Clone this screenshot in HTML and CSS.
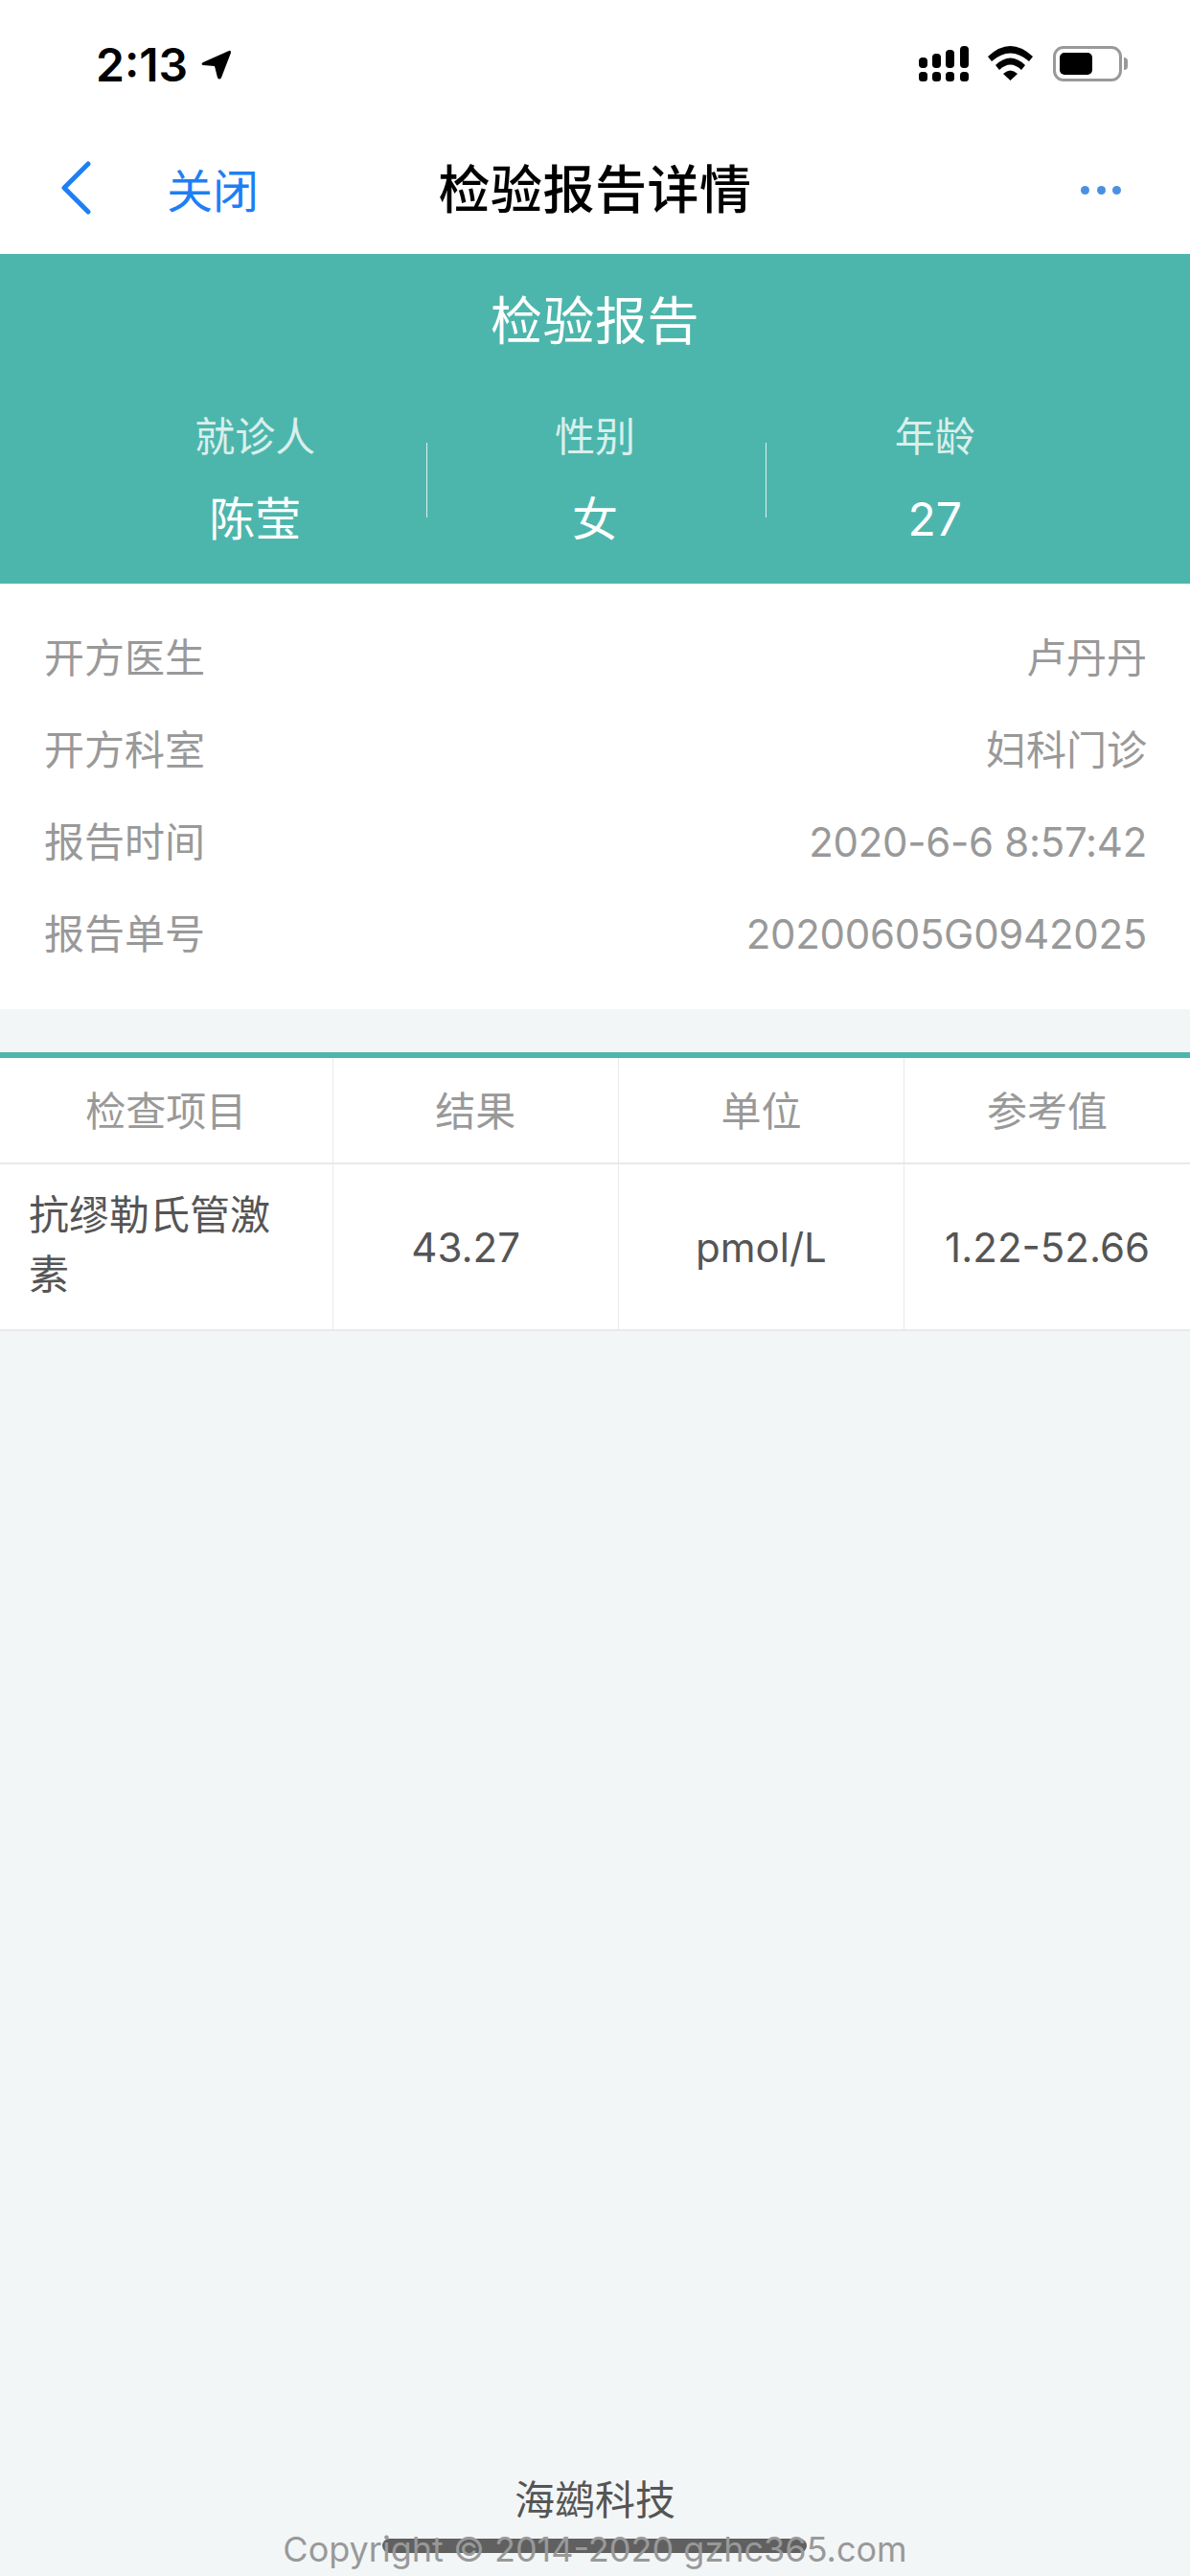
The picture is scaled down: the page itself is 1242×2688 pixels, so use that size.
FILE: index.html
```html
<!DOCTYPE html>
<html lang="zh-CN">
<head>
  <meta charset="UTF-8" />
  <meta name="viewport" content="width=device-width, initial-scale=1.0"/>
  <title>检验报告详情</title>
  <link rel="stylesheet" href="styles.css">
</head>
<body>
<div class="status-bar">
  <div class="status-left">
    <span class="clock">2:13</span>
    <svg class="arrow" width="33" height="31" viewBox="0 0 33 31"><path d="M30 1 L3 13 Q0 15 3 16 L15 17 L18 29 Q20 32 22 29 L32 3 Q32 0 30 1 Z" fill="#000"/></svg>
  </div>
  <div class="status-right">
    <svg width="52" height="37" viewBox="0 0 52 37" fill="#000">
      <rect x="0" y="12" width="9" height="11" rx="4"/>
      <rect x="14" y="8" width="9" height="15" rx="4"/>
      <rect x="28" y="4" width="9" height="19" rx="4"/>
      <rect x="43" y="0" width="9" height="23" rx="4"/>
      <rect x="0" y="27" width="9" height="10" rx="3.5"/>
      <rect x="14" y="27" width="9" height="10" rx="3.5"/>
      <rect x="28" y="27" width="9" height="10" rx="3.5"/>
      <rect x="43" y="27" width="9" height="10" rx="3.5"/>
    </svg>
    <svg width="47" height="36" viewBox="0 0 47 36" fill="#000">
      <path d="M0 11 Q23.500 -11 47 11 L43 16 Q23.500 -1 4 16 Z"/>
      <path d="M8 20 Q23.500 5 39 20 L35 25 Q23.500 14 12 25 Z"/>
      <path d="M16 29 Q23.500 22 31 29 L23.500 36 Z"/>
    </svg>
    <div class="battery">
      <div class="battery-body"><div class="battery-level"></div></div>
      <div class="battery-nub"></div>
    </div>
  </div>
</div>

<div class="nav">
  <div class="nav-left">
    <svg class="back" width="32" height="56" viewBox="0 0 32 56"><path d="M29 3 L4 28 L29 53" fill="none" stroke="#1e7ff5" stroke-width="5" stroke-linecap="round" stroke-linejoin="round"/></svg>
    <span class="close">关闭</span>
  </div>
  <div class="nav-title">检验报告详情</div>
  <div class="nav-right">
    <span class="dot"></span><span class="dot"></span><span class="dot"></span>
  </div>
</div>

<div class="report-head">
  <div class="report-title">检验报告</div>
  <div class="patient">
    <div class="patient-col">
      <div class="patient-label">就诊人</div>
      <div class="patient-value">陈莹</div>
    </div>
    <div class="patient-col">
      <div class="patient-label">性别</div>
      <div class="patient-value">女</div>
    </div>
    <div class="patient-col">
      <div class="patient-label">年龄</div>
      <div class="patient-value">27</div>
    </div>
  </div>
</div>

<div class="info">
  <div class="info-row"><span>开方医生</span><span>卢丹丹</span></div>
  <div class="info-row"><span>开方科室</span><span>妇科门诊</span></div>
  <div class="info-row"><span>报告时间</span><span class="num">2020-6-6 8:57:42</span></div>
  <div class="info-row"><span>报告单号</span><span class="num">20200605G0942025</span></div>
</div>

<table class="result">
  <colgroup>
    <col class="col-name"><col class="col-val"><col class="col-val"><col class="col-val">
  </colgroup>
  <thead>
    <tr><th>检查项目</th><th>结果</th><th>单位</th><th>参考值</th></tr>
  </thead>
  <tbody>
    <tr><td class="item-name">抗缪勒氏管激素</td><td class="item-result">43.27</td><td>pmol/L</td><td>1.22-52.66</td></tr>
  </tbody>
</table>

<div class="footer">
  <div class="company">海鹚科技</div>
  <div class="copyright">Copyright © 2014-2020 gzhc365.com</div>
  <div class="home-bar"></div>
</div>
</body>
</html>
```

FILE: styles.css
```css
* {
  box-sizing: border-box;
}
html, body {
  margin: 0;
  padding: 0;
}
body {
  width: 1242px;
  height: 2688px;
  display: flex;
  flex-direction: column;
  overflow: hidden;
  background-color: #f3f6f7;
  font-family: Inter, "Noto Sans CJK SC", sans-serif;
  font-size: 42px;
  color: #999;
}

/* status bar */
.status-bar {
  height: 132px;
  padding: 48px 65px 0 100px;
  display: flex;
  justify-content: space-between;
  align-items: flex-start;
  background: white;
}
.status-left {
  display: flex;
  align-items: center;
  gap: 13px;
  height: 38px;
}
.clock {
  font-size: 48px;
  font-weight: 600;
  color: #000;
}
.status-right {
  display: flex;
  align-items: flex-start;
  gap: 20px;
}
.battery {
  display: flex;
  align-items: center;
  gap: 2px;
  height: 37px;
  margin-left: 1px;
}
.battery-body {
  width: 72px;
  height: 37px;
  padding: 4px;
  border: 3px solid #999;
  border-radius: 11px;
}
.battery-level {
  width: 34px;
  height: 100%;
  background: #000;
  border-radius: 5px;
}
.battery-nub {
  width: 4px;
  height: 13px;
  background: #999;
  border-radius: 0 4px 4px 0;
}

/* nav */
.nav {
  height: 133px;
  padding: 0 0 5px 0;
  display: grid;
  grid-template-columns: 1fr auto 1fr;
  align-items: center;
  background: white;
}
.nav-left {
  display: flex;
  align-items: center;
  padding-left: 63px;
  gap: 79px;
}
.close {
  font-size: 48px;
  color: #1e7ff5;
}
.nav-title {
  margin-bottom: 3px;
  font-size: 54px;
  font-weight: 500;
  letter-spacing: 0.500px;
  color: #000;
}
.nav-right {
  display: flex;
  justify-content: flex-end;
  gap: 7.500px;
  margin-top: 4px;
  padding-right: 72px;
}
.dot {
  width: 9px;
  height: 9px;
  border-radius: 50%;
  background: #4a90e2;
}

/* teal header */
.report-head {
  height: 344px;
  padding-top: 33px;
  background-color: #4db6ac;
  color: white;
  text-align: center;
}
.report-title {
  font-size: 54px;
  letter-spacing: 0.500px;
  line-height: 76px;
}
.patient {
  display: flex;
  margin-top: 52px;
  padding: 0 89px;
}
.patient-col {
  flex: 1;
  position: relative;
}
.patient-col + .patient-col::before {
  content: "";
  position: absolute;
  left: 1px;
  top: 36px;
  width: 1px;
  height: 78px;
  background: rgba(255,255,255,0.8);
}
.patient-label {
  line-height: 60px;
  color: rgba(255,255,255,0.8);
}
.patient-value {
  margin-top: 22px;
  font-size: 48px;
  line-height: 68px;
}

/* info rows */
.info {
  height: 444px;
  padding: 30px 45px 0 46px;
  background: white;
}
.info-row {
  display: flex;
  justify-content: space-between;
  height: 96px;
  line-height: 96px;
}
.num {
  letter-spacing: -0.300px;
}

/* table */
.result {
  width: 1242px;
  margin-top: 45px;
  table-layout: fixed;
  border-collapse: collapse;
  border-top: 6px solid #4db6ac;
  background: white;
}
.col-name {
  width: 347px;
}
.result th, .result td {
  padding: 0;
  border: 1px solid #e9e9e9;
  border-top: none;
  border-bottom-width: 2px;
  text-align: center;
  font-weight: normal;
}
.result th:first-child, .result td:first-child {
  border-left: none;
}
.result th:last-child, .result td:last-child {
  border-right: none;
}
.result th {
  height: 113px;
  padding-bottom: 4px;
  color: #999;
}
.result td {
  height: 174px;
  color: #555;
}
.result td.item-name {
  padding: 22px 30px 26px;
  text-align: left;
  line-height: 62px;
}
.result td.item-result {
  padding-right: 20px;
}

/* footer */
.footer {
  position: relative;
  margin-top: auto;
  padding-bottom: 4px;
  text-align: center;
}
.company {
  margin-bottom: -3px;
  line-height: 60px;
  color: #555;
}
.copyright {
  position: relative;
  z-index: 1;
  font-size: 36px;
  line-height: 48px;
  color: #999;
}
.home-bar {
  position: absolute;
  left: 399px;
  bottom: 24px;
  width: 443px;
  height: 15px;
  border-radius: 8px;
  background: #606060;
}
```
